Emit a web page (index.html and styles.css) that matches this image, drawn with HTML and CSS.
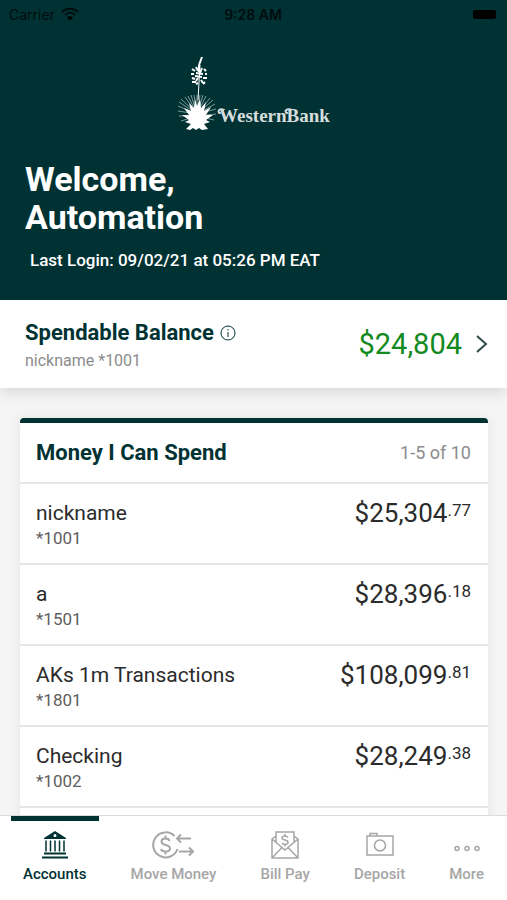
FILE: index.html
```html
<!DOCTYPE html>
<html lang="en">
<head>
  <meta charset="UTF-8" />
  <meta name="viewport" content="width=device-width, initial-scale=1" />
  <title>WesternBank - Accounts</title>
  <link rel="stylesheet" href="styles.css">
</head>
<body>
  <header class="hero">
    <div class="status-bar">
      <span class="carrier">
        Carrier
        <svg class="wifi" viewBox="0 0 18 14" aria-hidden="true">
          <path d="M1 5C5.500 0.500 12.500 0.500 17 5" />
          <path d="M4 8C7 5 11 5 14 8" />
          <path class="wifi-dot" d="M9 13.500L6 10.500Q9 8 12 10.500Z" />
        </svg>
      </span>
      <span class="clock">9:28 AM</span>
      <span class="battery"><span class="battery-level"></span></span>
    </div>

    <div class="brand">
      <svg class="yucca" viewBox="0 0 42 76" aria-hidden="true">
        <path class="stem" d="M23 9L21 44" />
        <path class="bloom" d="M25 1l-3 8M22 9v7M19 11l2 4M25 12l-2 5M15 13l3 2M27 13l2 2M19 17l7 1M14 18l3 0M28 18l2 0M18 20l7 1M21 22l-2 3M15 22l3 1M26 22l4 0M15 26l4 0M24 24l2 3M28 26l-2 2M19 28l2-1" />
        <path class="fine" d="M20 58L2 46M20 58L1 50M20 58L1 55M20 60L2 60M20 60L4 65M20 58L4 43M20 58L8 41M20 58L11 40M20 58L14 39M20 58L17 39M20 58L20 39M20 58L23 39M20 58L26 39M20 58L29 40M20 58L33 42M20 58L36 44M20 58L38 48M20 58L39 53M20 60L39 58M20 60L37 64" />
        <path class="leaves" d="M9 73L14 68L8 66L12 64L5 59L12 59L7 52L14 55L12 47L17 52L18 43L20 50L23 43L24 52L29 46L27 55L34 51L29 59L36 59L29 64L33 66L27 68L31 73L25 74L22 72L19 74L16 72L13 74Z" />
      </svg>
      <span class="brand-name">
        WesternBank
        <svg class="swash" viewBox="0 0 80 12" aria-hidden="true">
          <path d="M7 2Q2 0 1.500 3.500Q2 6 4 4.500" />
          <path d="M75 2Q70 0 68.500 3Q69 6 71 4.500" />
        </svg>
      </span>
    </div>

    <h1>Welcome,<br>Automation</h1>
    <p class="last-login">Last Login: 09/02/21 at 05:26 PM EAT</p>
  </header>

  <a class="balance" href="#balance">
    <span class="balance-info">
      <span class="balance-title">
        Spendable Balance
        <svg class="info" viewBox="0 0 16 16" aria-hidden="true">
          <circle cx="8" cy="8" r="7" />
          <path d="M8 7v5M8 4v1.500" />
        </svg>
      </span>
      <span class="balance-account">nickname *1001</span>
    </span>
    <span class="balance-amount">$24,804</span>
    <svg class="chevron" viewBox="0 0 12 20" aria-hidden="true"><path d="M1 2l9 8-9 8" /></svg>
  </a>

  <main>
    <section class="card">
      <div class="card-header">
        <h2>Money I Can Spend</h2>
        <span class="count">1-5 of 10</span>
      </div>
      <ul class="accounts">
        <li>
          <div><div class="name">nickname</div><div class="number">*1001</div></div>
          <div class="amount">$25,304<span class="cents">.77</span></div>
        </li>
        <li>
          <div><div class="name">a</div><div class="number">*1501</div></div>
          <div class="amount">$28,396<span class="cents">.18</span></div>
        </li>
        <li>
          <div><div class="name">AKs 1m Transactions</div><div class="number">*1801</div></div>
          <div class="amount">$108,099<span class="cents">.81</span></div>
        </li>
        <li>
          <div><div class="name">Checking</div><div class="number">*1002</div></div>
          <div class="amount">$28,249<span class="cents">.38</span></div>
        </li>
        <li></li>
      </ul>
    </section>
  </main>

  <nav class="tabs">
    <a class="tab active" href="#accounts">
      <svg width="26" height="28" viewBox="0 0 26 28" aria-hidden="true">
        <path class="solid" fill-rule="evenodd" d="M13 0L24 7V8H2V7ZM13 3a1.500 1.500 0 1 0 0 3a1.500 1.500 0 1 0 0-3Z" />
        <path class="columns" d="M4 9.500v11M8.500 9.500v11M13 9.500v11M17.500 9.500v11M22 9.500v11" />
        <path d="M2 22.500h22M0 26.500h26" />
      </svg>
      Accounts
    </a>
    <a class="tab" href="#move">
      <svg width="42" height="28" viewBox="0 0 42 28" aria-hidden="true">
        <path class="thick" d="M22.500 5A12.500 12.500 0 1 0 25.500 18" />
        <path class="thick" d="M17.500 10Q17 7.500 13.500 7.500Q9.500 7.500 9.500 10.500Q9.500 13 13.500 14Q18 15 18 17.500Q18 20.500 13.500 20.500Q9.500 20.500 9 18M13.500 4.500v3M13.500 20.500v3" />
        <path class="thick" d="M39 7.500H25M29 3.500L25 7.500L29 11.500M27 20.500H41M37 16.500L41 20.500L37 24.500" />
      </svg>
      Move Money
    </a>
    <a class="tab" href="#billpay">
      <svg width="28" height="28" viewBox="0 0 28 28" aria-hidden="true">
        <path d="M5 12V1H23V12M5 5L1 8V27H27V8L23 5M1 8L14 19L27 8M1 27L11 16.500M27 27L17 16.500" />
        <path d="M17 6.500Q16 5 14 5Q11 5 11 7Q11 8.500 14 9Q17 9.500 17 11.500Q17 13.500 14 13.500Q12 13.500 11 12M14 3v2M14 13.500v2" />
      </svg>
      Bill Pay
    </a>
    <a class="tab" href="#deposit">
      <svg width="28" height="28" viewBox="0 0 28 28" aria-hidden="true">
        <path d="M1 5H27V24H1ZM4 5V2.500H11V5" />
        <circle cx="14" cy="14.500" r="5.500" />
      </svg>
      Deposit
    </a>
    <a class="tab" href="#more">
      <svg width="28" height="28" viewBox="0 0 28 28" aria-hidden="true">
        <circle cx="4" cy="17.500" r="2" />
        <circle cx="14" cy="17.500" r="2" />
        <circle cx="24" cy="17.500" r="2" />
      </svg>
      More
    </a>
  </nav>
</body>
</html>
```
FILE: styles.css
```css
* {
  box-sizing: border-box;
}
body {
  display: flex;
  flex-direction: column;
  height: 100vh;
  margin: 0;
  background-color: #f5f5f5;
  color: #2b2b2b;
  font-family: Roboto, sans-serif;
}
h1, h2, p, ul {
  margin: 0;
  padding: 0;
}
a {
  color: inherit;
  text-decoration: none;
}
svg {
  flex: none;
  fill: none;
  stroke: currentColor;
}

/* header */
.hero {
  position: relative;
  z-index: 2;
  flex: none;
  padding-bottom: 30px;
  background-color: #003233;
  color: #fff;
}
.status-bar {
  display: grid;
  grid-template-columns: 1fr auto 1fr;
  align-items: center;
  height: 28px;
  padding: 0 10px 0 9px;
  color: #000c0d;
  font-family: Inter, sans-serif;
  font-size: 14px;
}
.carrier {
  display: flex;
  align-items: center;
  gap: 6px;
}
.wifi {
  width: 18px;
  height: 14px;
  stroke-width: 2;
}
.wifi-dot {
  fill: #000;
  stroke: none;
}
.clock {
  font-weight: 600;
}
.battery {
  justify-self: end;
  padding: 1px;
}
.battery-level {
  display: block;
  width: 23px;
  height: 9px;
  border-radius: 2px;
  background-color: #000;
}
.brand {
  display: flex;
  justify-content: center;
  align-items: flex-end;
  height: 104px;
}
.yucca {
  width: 42px;
  height: 76px;
}
.yucca .stem {
  stroke-width: 1;
}
.yucca .bloom {
  stroke-width: 2;
}
.yucca .fine {
  stroke-width: 1;
  opacity: 0.5;
}
.yucca .leaves {
  fill: #fff;
  stroke: none;
}
.brand-name {
  position: relative;
  padding-bottom: 5px;
  color: #d5dddd;
  font-family: "Liberation Serif", serif;
  font-size: 19px;
  font-weight: bold;
}
.swash {
  position: absolute;
  top: 3px;
  left: -2px;
  width: 80px;
  height: 12px;
  stroke-width: 2;
}
h1 {
  padding: 28px 25px 0;
  font-size: 34px;
  line-height: 38px;
}
.last-login {
  padding: 14px 30px 0;
  font-size: 17px;
  font-weight: 500;
  line-height: 20px;
}

/* spendable balance */
.balance {
  position: relative;
  display: flex;
  flex: none;
  align-items: center;
  height: 88px;
  padding: 0 19px 0 25px;
  background-color: #fff;
  box-shadow: 0 4px 14px rgba(0, 0, 0, 0.12);
}
.balance-info {
  flex: 1;
  padding-top: 6px;
}
.balance-title {
  display: flex;
  align-items: center;
  gap: 6px;
  color: #003233;
  font-size: 22px;
  font-weight: bold;
  line-height: 28px;
}
.info {
  width: 16px;
  height: 16px;
}
.balance-account {
  display: block;
  color: #8c8c8c;
  font-size: 16px;
  line-height: 28px;
}
.balance-amount {
  color: #128a1e;
  font-size: 29px;
}
.chevron {
  width: 12px;
  height: 20px;
  margin-left: 14px;
  color: #2f4a4c;
  stroke-width: 2;
}

/* accounts */
main {
  flex: 1;
  min-height: 0;
  padding: 30px 19px 0 20px;
  overflow: hidden;
}
.card {
  border-top: 5px solid #003233;
  border-radius: 4px;
  background-color: #fff;
  box-shadow: 0 0 14px rgba(0, 0, 0, 0.07);
}
.card-header {
  display: flex;
  justify-content: space-between;
  align-items: center;
  height: 59px;
  padding: 0 17px 0 16px;
}
h2 {
  color: #003233;
  font-size: 22px;
}
.count {
  color: #8c8c8c;
  font-size: 18px;
}
.accounts {
  list-style: none;
}
.accounts li {
  display: flex;
  justify-content: space-between;
  min-height: 81px;
  padding: 16px 17px 0 16px;
  border-top: 2px solid #e6e6e6;
}
.name {
  font-size: 21px;
  line-height: 26px;
}
.number {
  color: #5e5e5e;
  font-size: 17px;
  line-height: 24px;
}
.amount {
  font-size: 26px;
  line-height: 26px;
}
.cents {
  font-size: 17px;
  line-height: 17px;
  vertical-align: 6px;
}

/* bottom tabs */
.tabs {
  display: flex;
  flex: none;
  justify-content: space-between;
  height: 85px;
  padding: 0 11px;
  border-top: 1px solid #dcdcdc;
  background-color: #fff;
}
.tab {
  display: flex;
  flex-direction: column;
  align-items: center;
  gap: 6px;
  padding: 10px 12px 0;
  border-top: 5px solid transparent;
  color: #a6a6a6;
  font-size: 15px;
  font-weight: 500;
  line-height: 18px;
}
.tab svg {
  stroke-width: 1.5;
}
.tab.active {
  border-top-color: #003233;
  color: #003233;
}
.tab.active svg {
  stroke-width: 2;
}
.tab .columns {
  stroke-width: 1.5;
}
.tab .solid {
  fill: currentColor;
  stroke: none;
}
.tab .thick {
  stroke-width: 2;
}
```
